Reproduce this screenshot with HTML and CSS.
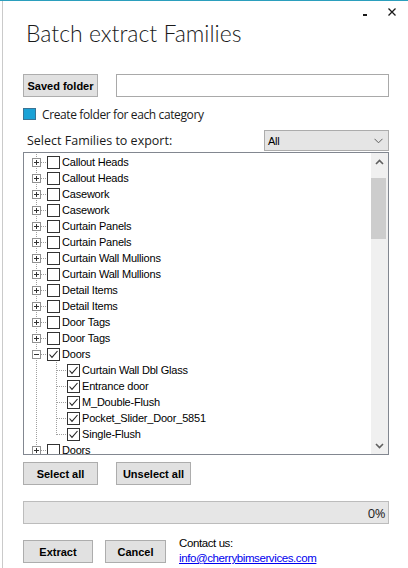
FILE: index.html
```html
<!DOCTYPE html>
<html>
<head>
<meta charset="utf-8">
<link rel="stylesheet" href="styles.css">
</head>
<body>
<div class="window">
  <div class="frame">
    <div class="caption">
      <svg class="caption-btns" width="36" height="17" viewBox="0 0 36 17">
        <rect x="1" y="13" width="4" height="2" fill="#1a1a1a"/>
        <path d="M26.5 7.5L33.5 14.5M33.5 7.5L26.5 14.5" stroke="#1a1a1a" stroke-width="1.3" fill="none"/>
      </svg>
    </div>
    <h1 class="title">Batch extract Families</h1>

    <div class="folder-row">
      <button class="btn btn-folder">Saved folder</button>
      <div class="textbox"></div>
    </div>

    <label class="check-row">
      <span class="bluebox"></span>
      <span class="seg">Create folder for each category</span>
    </label>

    <div class="select-row">
      <span class="seg seg-lg">Select Families to export:</span>
      <div class="combo">
        <span>All</span>
        <svg width="9" height="6" viewBox="0 0 9 6"><path d="M0.5 0.8L4.5 4.8L8.5 0.8" stroke="#606060" stroke-width="1" fill="none"/></svg>
      </div>
    </div>

    <div class="tree">
      <div class="tree-list">
        <div class="row"><svg class="exp" width="9" height="9" viewBox="0 0 9 9"><rect x="0.5" y="0.5" width="8" height="8" fill="#fff" stroke="#919191"/><path d="M2 4.5H7M4.5 2V7" stroke="#333"/></svg><span class="hl"></span><span class="cb"></span><span class="lbl">Callout Heads</span></div>
        <div class="row"><svg class="exp" width="9" height="9" viewBox="0 0 9 9"><rect x="0.5" y="0.5" width="8" height="8" fill="#fff" stroke="#919191"/><path d="M2 4.5H7M4.5 2V7" stroke="#333"/></svg><span class="hl"></span><span class="cb"></span><span class="lbl">Callout Heads</span></div>
        <div class="row"><svg class="exp" width="9" height="9" viewBox="0 0 9 9"><rect x="0.5" y="0.5" width="8" height="8" fill="#fff" stroke="#919191"/><path d="M2 4.5H7M4.5 2V7" stroke="#333"/></svg><span class="hl"></span><span class="cb"></span><span class="lbl">Casework</span></div>
        <div class="row"><svg class="exp" width="9" height="9" viewBox="0 0 9 9"><rect x="0.5" y="0.5" width="8" height="8" fill="#fff" stroke="#919191"/><path d="M2 4.5H7M4.5 2V7" stroke="#333"/></svg><span class="hl"></span><span class="cb"></span><span class="lbl">Casework</span></div>
        <div class="row"><svg class="exp" width="9" height="9" viewBox="0 0 9 9"><rect x="0.5" y="0.5" width="8" height="8" fill="#fff" stroke="#919191"/><path d="M2 4.5H7M4.5 2V7" stroke="#333"/></svg><span class="hl"></span><span class="cb"></span><span class="lbl">Curtain Panels</span></div>
        <div class="row"><svg class="exp" width="9" height="9" viewBox="0 0 9 9"><rect x="0.5" y="0.5" width="8" height="8" fill="#fff" stroke="#919191"/><path d="M2 4.5H7M4.5 2V7" stroke="#333"/></svg><span class="hl"></span><span class="cb"></span><span class="lbl">Curtain Panels</span></div>
        <div class="row"><svg class="exp" width="9" height="9" viewBox="0 0 9 9"><rect x="0.5" y="0.5" width="8" height="8" fill="#fff" stroke="#919191"/><path d="M2 4.5H7M4.5 2V7" stroke="#333"/></svg><span class="hl"></span><span class="cb"></span><span class="lbl">Curtain Wall Mullions</span></div>
        <div class="row"><svg class="exp" width="9" height="9" viewBox="0 0 9 9"><rect x="0.5" y="0.5" width="8" height="8" fill="#fff" stroke="#919191"/><path d="M2 4.5H7M4.5 2V7" stroke="#333"/></svg><span class="hl"></span><span class="cb"></span><span class="lbl">Curtain Wall Mullions</span></div>
        <div class="row"><svg class="exp" width="9" height="9" viewBox="0 0 9 9"><rect x="0.5" y="0.5" width="8" height="8" fill="#fff" stroke="#919191"/><path d="M2 4.5H7M4.5 2V7" stroke="#333"/></svg><span class="hl"></span><span class="cb"></span><span class="lbl">Detail Items</span></div>
        <div class="row"><svg class="exp" width="9" height="9" viewBox="0 0 9 9"><rect x="0.5" y="0.5" width="8" height="8" fill="#fff" stroke="#919191"/><path d="M2 4.5H7M4.5 2V7" stroke="#333"/></svg><span class="hl"></span><span class="cb"></span><span class="lbl">Detail Items</span></div>
        <div class="row"><svg class="exp" width="9" height="9" viewBox="0 0 9 9"><rect x="0.5" y="0.5" width="8" height="8" fill="#fff" stroke="#919191"/><path d="M2 4.5H7M4.5 2V7" stroke="#333"/></svg><span class="hl"></span><span class="cb"></span><span class="lbl">Door Tags</span></div>
        <div class="row"><svg class="exp" width="9" height="9" viewBox="0 0 9 9"><rect x="0.5" y="0.5" width="8" height="8" fill="#fff" stroke="#919191"/><path d="M2 4.5H7M4.5 2V7" stroke="#333"/></svg><span class="hl"></span><span class="cb"></span><span class="lbl">Door Tags</span></div>
        <div class="row row-open"><svg class="exp" width="9" height="9" viewBox="0 0 9 9"><rect x="0.5" y="0.5" width="8" height="8" fill="#fff" stroke="#919191"/><path d="M2 4.5H7" stroke="#333"/></svg><span class="hl"></span><span class="cb checked"><svg width="11" height="11" viewBox="0 0 11 11"><path d="M1.5 5.5L4 8.3L9.5 2" stroke="#222" stroke-width="1.1" fill="none"/></svg></span><span class="lbl">Doors</span></div>
        <div class="row child"><span class="hl hl-child"></span><span class="cb checked"><svg width="11" height="11" viewBox="0 0 11 11"><path d="M1.5 5.5L4 8.3L9.5 2" stroke="#222" stroke-width="1.1" fill="none"/></svg></span><span class="lbl">Curtain Wall Dbl Glass</span></div>
        <div class="row child"><span class="hl hl-child"></span><span class="cb checked"><svg width="11" height="11" viewBox="0 0 11 11"><path d="M1.5 5.5L4 8.3L9.5 2" stroke="#222" stroke-width="1.1" fill="none"/></svg></span><span class="lbl">Entrance door</span></div>
        <div class="row child"><span class="hl hl-child"></span><span class="cb checked"><svg width="11" height="11" viewBox="0 0 11 11"><path d="M1.5 5.5L4 8.3L9.5 2" stroke="#222" stroke-width="1.1" fill="none"/></svg></span><span class="lbl">M_Double-Flush</span></div>
        <div class="row child"><span class="hl hl-child"></span><span class="cb checked"><svg width="11" height="11" viewBox="0 0 11 11"><path d="M1.5 5.5L4 8.3L9.5 2" stroke="#222" stroke-width="1.1" fill="none"/></svg></span><span class="lbl">Pocket_Slider_Door_5851</span></div>
        <div class="row child child-last"><span class="hl hl-child"></span><span class="cb checked"><svg width="11" height="11" viewBox="0 0 11 11"><path d="M1.5 5.5L4 8.3L9.5 2" stroke="#222" stroke-width="1.1" fill="none"/></svg></span><span class="lbl">Single-Flush</span></div>
        <div class="row"><svg class="exp" width="9" height="9" viewBox="0 0 9 9"><rect x="0.5" y="0.5" width="8" height="8" fill="#fff" stroke="#919191"/><path d="M2 4.5H7M4.5 2V7" stroke="#333"/></svg><span class="hl"></span><span class="cb"></span><span class="lbl">Doors</span></div>
      </div>
      <div class="scrollbar">
        <div class="sb-arrow"><svg width="9" height="6" viewBox="0 0 9 6"><path d="M1 5L4.5 1.5L8 5" stroke="#606060" stroke-width="1.6" fill="none"/></svg></div>
        <div class="sb-track"><div class="sb-thumb"></div></div>
        <div class="sb-arrow"><svg width="9" height="6" viewBox="0 0 9 6"><path d="M1 1L4.5 4.5L8 1" stroke="#606060" stroke-width="1.6" fill="none"/></svg></div>
      </div>
    </div>

    <div class="select-btns">
      <button class="btn btn-sel">Select all</button>
      <button class="btn btn-sel">Unselect all</button>
    </div>

    <div class="progress"><span>0%</span></div>

    <div class="bottom-row">
      <button class="btn btn-extract">Extract</button>
      <button class="btn btn-cancel">Cancel</button>
      <div class="contact">
        <div>Contact us:</div>
        <a class="mail" href="#">info@cherrybimservices.com</a>
      </div>
    </div>
  </div>
</div>
</body>
</html>
```

FILE: styles.css
```css
html, body {
  margin: 0;
  padding: 0;
  background: #fff;
}

.window {
  width: 408px;
  height: 568px;
  box-sizing: border-box;
  border-top: 1px solid #2b9fbd;
  padding-left: 2px;
  overflow: hidden;
}

.frame {
  height: 100%;
  box-sizing: border-box;
  border-left: 1px solid #cacaca;
  padding: 0 19px 0 20px;
  display: flex;
  flex-direction: column;
  font-family: "Liberation Sans", Arial, sans-serif;
  color: #000;
}

.caption {
  height: 17px;
  display: flex;
  justify-content: flex-end;
}

.caption-btns {
  margin-right: -9px;
}

.title {
  margin: 0;
  padding-left: 3px;
  height: 30px;
  line-height: 30px;
  font-family: "Lato", "Open Sans", sans-serif;
  font-weight: 300;
  font-size: 23px;
  color: #1a1a1a;
  white-space: nowrap;
}

.seg {
  font-family: "Open Sans", "Noto Sans", sans-serif;
  font-size: 12px;
  color: #1a1a1a;
  letter-spacing: -0.38px;
  white-space: nowrap;
}

.seg-lg {
  font-size: 12.5px;
  letter-spacing: 0;
}

.btn {
  margin: 0;
  padding: 0;
  box-sizing: border-box;
  background: #e1e1e1;
  border: 1px solid #adadad;
  font-family: "Liberation Sans", Arial, sans-serif;
  font-weight: bold;
  font-size: 11px;
  color: #000;
  text-align: center;
}

.folder-row {
  margin-top: 26px;
  display: flex;
  gap: 18px;
  height: 23px;
}

.btn-folder {
  width: 75px;
  height: 23px;
}

.textbox {
  flex: 1;
  box-sizing: border-box;
  border: 1px solid #a9a9a9;
  background: #fff;
}

.check-row {
  margin-top: 9px;
  height: 16px;
  display: flex;
  align-items: center;
  gap: 6px;
}

.bluebox {
  width: 13px;
  height: 12px;
  box-sizing: border-box;
  background: #1ba2d6;
  border: 1px solid #3a7394;
}

.select-row {
  margin-top: 8px;
  height: 21px;
  display: flex;
  align-items: center;
  justify-content: space-between;
  padding-left: 4px;
}

.combo {
  width: 125px;
  height: 21px;
  box-sizing: border-box;
  background: #e5e5e5;
  border: 1px solid #acacac;
  display: flex;
  align-items: center;
  justify-content: space-between;
  padding: 0 5px 0 3px;
  font-size: 11px;
  letter-spacing: -0.3px;
}

.tree {
  margin-top: 1px;
  height: 303px;
  box-sizing: border-box;
  border: 1px solid #828790;
  display: flex;
  background: #fff;
}

.tree-list {
  flex: 1;
  overflow: hidden;
  padding-top: 1px;
}

.row {
  height: 16px;
  display: flex;
  align-items: center;
  font-size: 11px;
  letter-spacing: -0.2px;
  white-space: nowrap;
  background-image: repeating-linear-gradient(to bottom, #a0a0a0 0 1px, transparent 1px 2px);
  background-size: 1px 100%;
  background-position: 12px 0;
  background-repeat: no-repeat;
}

.row-open {
  background-image:
    repeating-linear-gradient(to bottom, #a0a0a0 0 1px, transparent 1px 2px),
    repeating-linear-gradient(to bottom, #a0a0a0 0 1px, transparent 1px 2px);
  background-size: 1px 100%, 1px 8px;
  background-position: 12px 0, 32px 8px;
}

.child {
  padding-left: 33px;
  background-image:
    repeating-linear-gradient(to bottom, #a0a0a0 0 1px, transparent 1px 2px),
    repeating-linear-gradient(to bottom, #a0a0a0 0 1px, transparent 1px 2px);
  background-size: 1px 100%, 1px 100%;
  background-position: 12px 0, 32px 0;
}

.child-last {
  background-size: 1px 100%, 1px 9px;
}

.exp {
  margin-left: 8px;
  flex: none;
  display: block;
}

.hl {
  width: 6px;
  height: 1px;
  flex: none;
  background-image: repeating-linear-gradient(to right, #a0a0a0 0 1px, transparent 1px 2px);
}

.hl-child {
  width: 10px;
}

.cb {
  width: 13px;
  height: 13px;
  flex: none;
  box-sizing: border-box;
  border: 1px solid #333;
  background: #fff;
  display: flex;
  align-items: center;
  justify-content: center;
}

.cb svg {
  display: block;
}

.lbl {
  margin-left: 2px;
  color: #000;
}

.scrollbar {
  width: 17px;
  flex: none;
  background: #f0f0f0;
  display: flex;
  flex-direction: column;
}

.sb-arrow {
  height: 17px;
  display: flex;
  align-items: center;
  justify-content: center;
}

.sb-arrow svg {
  display: block;
}

.sb-track {
  flex: 1;
}

.sb-thumb {
  margin: 8px 2px 0 0;
  height: 61px;
  background: #cdcdcd;
}

.select-btns {
  margin-top: 7px;
  display: flex;
  gap: 18px;
}

.btn-sel {
  width: 75px;
  height: 23px;
}

.progress {
  margin-top: 16px;
  height: 23px;
  box-sizing: border-box;
  border: 1px solid #bcbcbc;
  background: #e6e6e6;
  display: flex;
  align-items: center;
  justify-content: flex-end;
  padding-right: 3px;
  font-family: "Open Sans", sans-serif;
  font-size: 13px;
  letter-spacing: -0.5px;
  color: #222;
}

.bottom-row {
  margin-top: 16px;
  display: flex;
  align-items: flex-start;
}

.btn-extract {
  width: 70px;
  height: 23px;
}

.btn-cancel {
  width: 61px;
  height: 23px;
  margin-left: 12px;
}

.contact {
  margin-left: 13px;
  margin-top: -4px;
  font-size: 11.5px;
  letter-spacing: -0.4px;
  line-height: 15px;
  color: #000;
}

.mail {
  color: #0000ee;
  text-decoration: underline;
}
```
